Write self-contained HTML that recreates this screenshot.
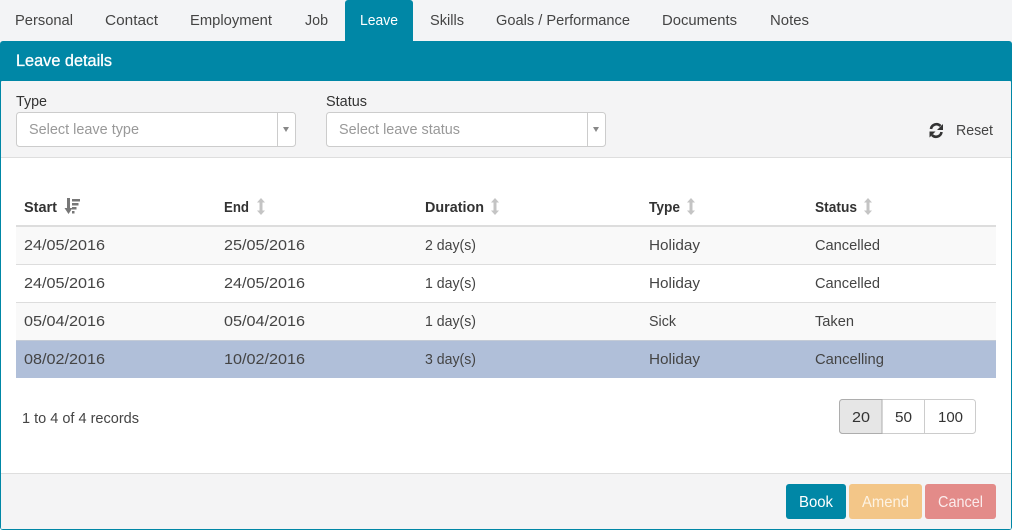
<!DOCTYPE html>
<html><head><meta charset="utf-8"><style>
html,body{margin:0;padding:0;width:1012px;height:530px;overflow:hidden;background:#f3f4f6}
svg{display:block}
text{font-family:"Liberation Sans",sans-serif;font-size:15px;fill:#444}
.h{font-weight:bold;fill:#333;font-size:15px}
</style></head><body>
<svg width="1012" height="530" viewBox="0 0 1012 530" xmlns="http://www.w3.org/2000/svg">
<rect width="1012" height="530" fill="#f3f4f6"/>
<!-- panel -->
<path d="M0 44a3 3 0 0 1 3-3H1009a3 3 0 0 1 3 3V527a3 3 0 0 1-3 3H3a3 3 0 0 1-3-3Z" fill="#0087a6"/>
<rect x="1" y="81" width="1010" height="448" fill="#f4f4f5" rx="1"/>
<rect x="1" y="157" width="1010" height="1" fill="#dedede"/>
<rect x="1" y="158" width="1010" height="315" fill="#fff"/>
<rect x="1" y="473" width="1010" height="1" fill="#dedede"/>
<!-- active tab -->
<path d="M345 3a3 3 0 0 1 3-3H410a3 3 0 0 1 3 3V42H345Z" fill="#0087a6"/>
<!-- tabs -->
<text x="15" y="25" textLength="58" lengthAdjust="spacingAndGlyphs">Personal</text>
<text x="105" y="25" textLength="53" lengthAdjust="spacingAndGlyphs">Contact</text>
<text x="190" y="25" textLength="82" lengthAdjust="spacingAndGlyphs">Employment</text>
<text x="305" y="25" textLength="23" lengthAdjust="spacingAndGlyphs">Job</text>
<text x="360" y="25" textLength="38" lengthAdjust="spacingAndGlyphs" style="fill:#fff">Leave</text>
<text x="430" y="25" textLength="34" lengthAdjust="spacingAndGlyphs">Skills</text>
<text x="496" y="25" textLength="134" lengthAdjust="spacingAndGlyphs">Goals / Performance</text>
<text x="662" y="25" textLength="75" lengthAdjust="spacingAndGlyphs">Documents</text>
<text x="770" y="25" textLength="39" lengthAdjust="spacingAndGlyphs">Notes</text>
<!-- header -->
<text x="16" y="66" textLength="96" lengthAdjust="spacingAndGlyphs" style="font-size:17px;fill:#fff;stroke:#fff;stroke-width:.3">Leave details</text>
<!-- filters -->
<text x="16" y="106" textLength="31" lengthAdjust="spacingAndGlyphs" style="fill:#333">Type</text>
<text x="326" y="106" textLength="41" lengthAdjust="spacingAndGlyphs" style="fill:#333">Status</text>
<rect x="16.500" y="112.500" width="279" height="34" rx="3" fill="#fff" stroke="#ccc"/>
<rect x="277" y="113" width="1" height="33" fill="#ccc"/>
<path d="M283 127h6l-3 5Z" fill="#888"/>
<text x="29" y="134" textLength="110" lengthAdjust="spacingAndGlyphs" style="fill:#999">Select leave type</text>
<rect x="326.500" y="112.500" width="279" height="34" rx="3" fill="#fff" stroke="#ccc"/>
<rect x="587" y="113" width="1" height="33" fill="#ccc"/>
<path d="M593 127h6l-3 5Z" fill="#888"/>
<text x="339" y="134" textLength="121" lengthAdjust="spacingAndGlyphs" style="fill:#999">Select leave status</text>
<!-- reset -->
<g fill="none" stroke="#333" stroke-width="2.600">
<path d="M931 129a5.500 5.500 0 0 1 9.500-3"/>
<path d="M941.500 132a5.500 5.500 0 0 1-9.500 3"/>
</g>
<path d="M943 124v6h-6ZM929.500 137.500v-6h6Z" fill="#333"/>
<text x="956" y="135" textLength="37" lengthAdjust="spacingAndGlyphs">Reset</text>
<!-- table head -->
<text class="h" x="24" y="212" textLength="33" lengthAdjust="spacingAndGlyphs">Start</text>
<text class="h" x="224" y="212" textLength="25" lengthAdjust="spacingAndGlyphs">End</text>
<text class="h" x="425" y="212" textLength="59" lengthAdjust="spacingAndGlyphs">Duration</text>
<text class="h" x="649" y="212" textLength="31" lengthAdjust="spacingAndGlyphs">Type</text>
<text class="h" x="815" y="212" textLength="42" lengthAdjust="spacingAndGlyphs">Status</text>
<!-- sort icons -->
<path d="M67 198h3v10h2.500l-4 6-4-6H67Z" fill="#777"/>
<path d="M72 199h8v2.500h-8ZM72 203h6.500v2.500h-6.500ZM72 207h4.500v2.500h-4.500ZM72 211h2.500v2.500h-2.500Z" fill="#777"/>
<g fill="#c4c4c4">
<path d="M261 198l4 4.500h-2.500v8h2.500l-4 4.500-4-4.500h2.500v-8h-2.500Z"/>
<path d="M495 198l4 4.500h-2.500v8h2.500l-4 4.500-4-4.500h2.500v-8h-2.500Z"/>
<path d="M691 198l4 4.500h-2.500v8h2.500l-4 4.500-4-4.500h2.500v-8h-2.500Z"/>
<path d="M868 198l4 4.500h-2.500v8h2.500l-4 4.500-4-4.500h2.500v-8h-2.500Z"/>
</g>
<!-- rows -->
<rect x="16" y="225" width="980" height="2" fill="#ddd"/>
<rect x="16" y="227" width="980" height="37" fill="#f9f9f9"/>
<rect x="16" y="264" width="980" height="1" fill="#ddd"/>
<rect x="16" y="302" width="980" height="1" fill="#ddd"/>
<rect x="16" y="303" width="980" height="37" fill="#f9f9f9"/>
<rect x="16" y="340" width="980" height="38" fill="#b0bfd9"/>
<rect x="16" y="340" width="980" height="1" fill="#c4cbd6"/>

<text x="24" y="250" textLength="81" lengthAdjust="spacingAndGlyphs">24/05/2016</text>
<text x="224" y="250" textLength="81" lengthAdjust="spacingAndGlyphs">25/05/2016</text>
<text x="425" y="250" textLength="51" lengthAdjust="spacingAndGlyphs">2 day(s)</text>
<text x="649" y="250" textLength="51" lengthAdjust="spacingAndGlyphs">Holiday</text>
<text x="815" y="250" textLength="65" lengthAdjust="spacingAndGlyphs">Cancelled</text>

<text x="24" y="288" textLength="81" lengthAdjust="spacingAndGlyphs">24/05/2016</text>
<text x="224" y="288" textLength="81" lengthAdjust="spacingAndGlyphs">24/05/2016</text>
<text x="425" y="288" textLength="51" lengthAdjust="spacingAndGlyphs">1 day(s)</text>
<text x="649" y="288" textLength="51" lengthAdjust="spacingAndGlyphs">Holiday</text>
<text x="815" y="288" textLength="65" lengthAdjust="spacingAndGlyphs">Cancelled</text>

<text x="24" y="326" textLength="81" lengthAdjust="spacingAndGlyphs">05/04/2016</text>
<text x="224" y="326" textLength="81" lengthAdjust="spacingAndGlyphs">05/04/2016</text>
<text x="425" y="326" textLength="51" lengthAdjust="spacingAndGlyphs">1 day(s)</text>
<text x="649" y="326" textLength="27" lengthAdjust="spacingAndGlyphs">Sick</text>
<text x="815" y="326" textLength="39" lengthAdjust="spacingAndGlyphs">Taken</text>

<text x="24" y="364" textLength="81" lengthAdjust="spacingAndGlyphs">08/02/2016</text>
<text x="224" y="364" textLength="81" lengthAdjust="spacingAndGlyphs">10/02/2016</text>
<text x="425" y="364" textLength="51" lengthAdjust="spacingAndGlyphs">3 day(s)</text>
<text x="649" y="364" textLength="51" lengthAdjust="spacingAndGlyphs">Holiday</text>
<text x="815" y="364" textLength="69" lengthAdjust="spacingAndGlyphs">Cancelling</text>
<!-- pagination -->
<text x="22" y="423" textLength="117" lengthAdjust="spacingAndGlyphs">1 to 4 of 4 records</text>
<rect x="839.500" y="399.500" width="136" height="34" rx="3" fill="#fff" stroke="#ccc"/>
<path d="M839.500 402.500a3 3 0 0 1 3-3H882v34H842.500a3 3 0 0 1-3-3Z" fill="#e6e6e6" stroke="#adadad"/>
<rect x="924" y="400" width="1" height="33" fill="#ccc"/>
<text x="852" y="422" textLength="18" lengthAdjust="spacingAndGlyphs" style="fill:#333">20</text>
<text x="895" y="422" textLength="17" lengthAdjust="spacingAndGlyphs" style="fill:#333">50</text>
<text x="938" y="422" textLength="25" lengthAdjust="spacingAndGlyphs" style="fill:#333">100</text>
<!-- footer buttons -->
<rect x="786" y="484" width="60" height="35" rx="3" fill="#0087a6"/>
<text x="799" y="507" textLength="34" lengthAdjust="spacingAndGlyphs" style="fill:#fff;font-size:16px">Book</text>
<rect x="849" y="484" width="73" height="35" rx="3" fill="#f3c688"/>
<text x="862" y="507" textLength="47" lengthAdjust="spacingAndGlyphs" style="fill:#fdf3e4;font-size:16px">Amend</text>
<rect x="925" y="484" width="71" height="35" rx="3" fill="#e38b89"/>
<text x="938" y="507" textLength="45" lengthAdjust="spacingAndGlyphs" style="fill:#fbecec;font-size:16px">Cancel</text>
</svg>
</body></html>
